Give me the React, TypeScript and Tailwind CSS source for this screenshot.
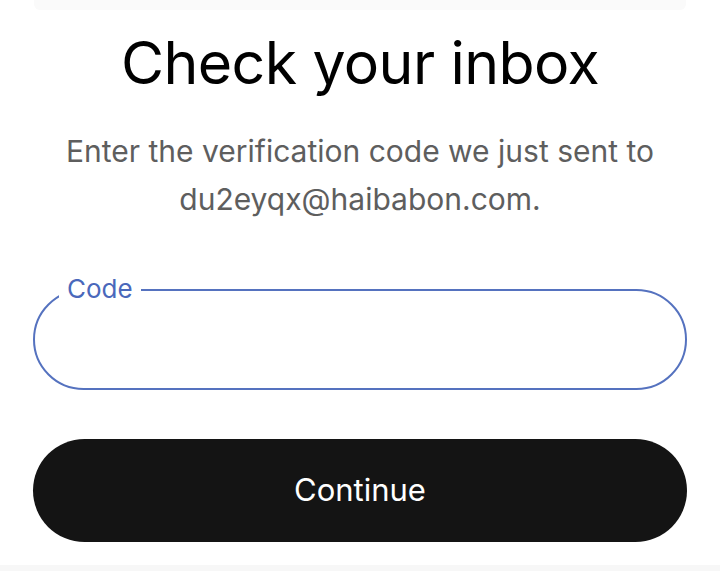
import React, { useState } from 'react';

const App: React.FC = () => {
  const [code, setCode] = useState('');

  return (
    <div className="min-h-screen h-[571px] bg-white flex flex-col overflow-hidden" style={{ fontFamily: 'Inter, "Noto Sans", sans-serif' }}>
      {/* edge of the card above */}
      <div className="mx-[34px] h-[10px] bg-[#fafafa] rounded-b-md shrink-0" />

      <main className="flex-1 flex flex-col px-[33px]">
        <h1 className="mt-[17px] text-center text-[59px] leading-[72px] font-normal tracking-[-0.6px] text-black">
          Check your inbox
        </h1>

        <p className="mt-[28px] text-center text-[30px] leading-[48px] text-[#5e5e5e]">
          Enter the verification code we just sent to
          <br />
          du2eyqx@haibabon.com.
        </p>

        <div className="relative mt-[66px] h-[101px] rounded-full border-2 border-[#5572bf]">
          <label
            htmlFor="code"
            className="absolute left-[24px] top-[-19px] bg-white px-[8px] text-[26px] leading-[34px] text-[#4a68bb]"
          >
            Code
          </label>
          <input
            id="code"
            value={code}
            onChange={e => setCode(e.target.value)}
            className="w-full h-full bg-transparent rounded-full px-[34px] text-[26px] outline-none"
          />
        </div>

        <button className="mt-[49px] h-[103px] w-full rounded-full bg-[#141414] text-white text-[31px] font-normal">
          Continue
        </button>
      </main>

      <div className="h-[6px] bg-[#f7f7f7] shrink-0" />
    </div>
  );
};

export default App;
